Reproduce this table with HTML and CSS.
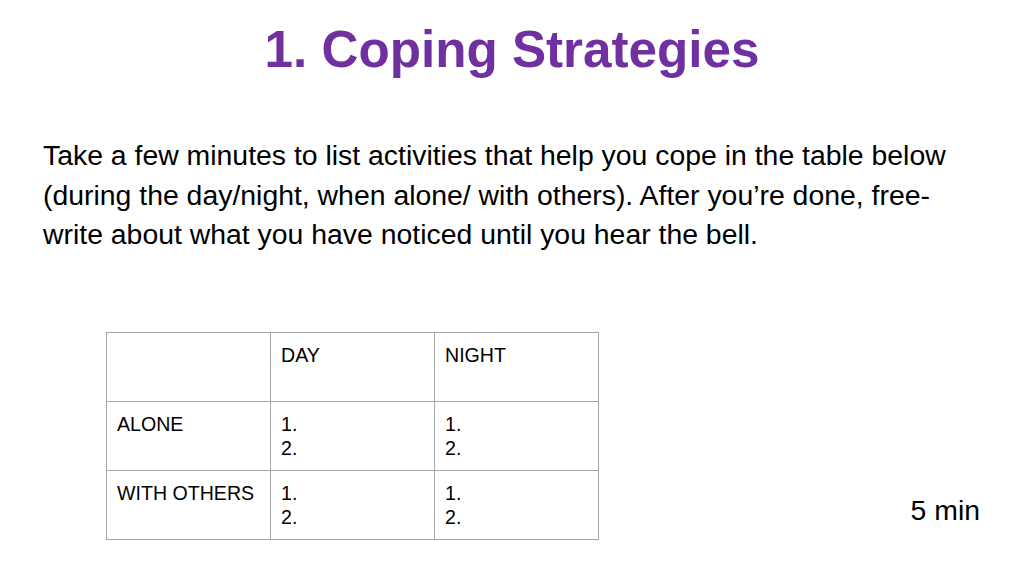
FILE: index.html
```html
<!DOCTYPE html>
<html>
<head>
<meta charset="utf-8">
<link rel="stylesheet" href="styles.css">
</head>
<body>
<div class="slide">
  <h1 class="title">1. Coping Strategies</h1>
  <p class="intro">Take a few minutes to list activities that help you cope in the table below (during the day/night, when alone/ with others). After you’re done, free-write about what you have noticed until you hear the bell.</p>
  <div class="bottom">
    <table class="grid">
      <tr><td></td><td>DAY</td><td>NIGHT</td></tr>
      <tr><td>ALONE</td><td>1.<br>2.</td><td>1.<br>2.</td></tr>
      <tr><td>WITH OTHERS</td><td>1.<br>2.</td><td>1.<br>2.</td></tr>
    </table>
    <div class="timer">5 min</div>
  </div>
</div>
</body>
</html>
```
FILE: styles.css
```css
html, body {
  margin: 0;
  padding: 0;
  background: #ffffff;
}
.slide {
  width: 1024px;
  height: 576px;
  overflow: hidden;
  font-family: "Liberation Sans", Arial, sans-serif;
  color: #000;
}
.title {
  margin: 0;
  padding-top: 18px;
  text-align: center;
  font-size: 51.2px;
  font-weight: bold;
  color: #7030a0;
  line-height: 64px;
}
.intro {
  margin: 54px 0 0 43px;
  width: 930px;
  font-size: 28.4px;
  line-height: 39.5px;
}
.bottom {
  display: flex;
  align-items: flex-end;
  justify-content: space-between;
  margin-top: 77px;
  padding-left: 106px;
  padding-right: 44px;
}
.grid {
  border-collapse: collapse;
}
.grid td {
  border: 1px solid #a6a6a6;
  width: 164px;
  height: 69px;
  box-sizing: border-box;
  vertical-align: top;
  padding: 10px 11px 0 10px;
  font-size: 19.6px;
  line-height: 24px;
}
.timer {
  font-size: 28.4px;
  line-height: 30px;
  margin-bottom: 15px;
}
```
